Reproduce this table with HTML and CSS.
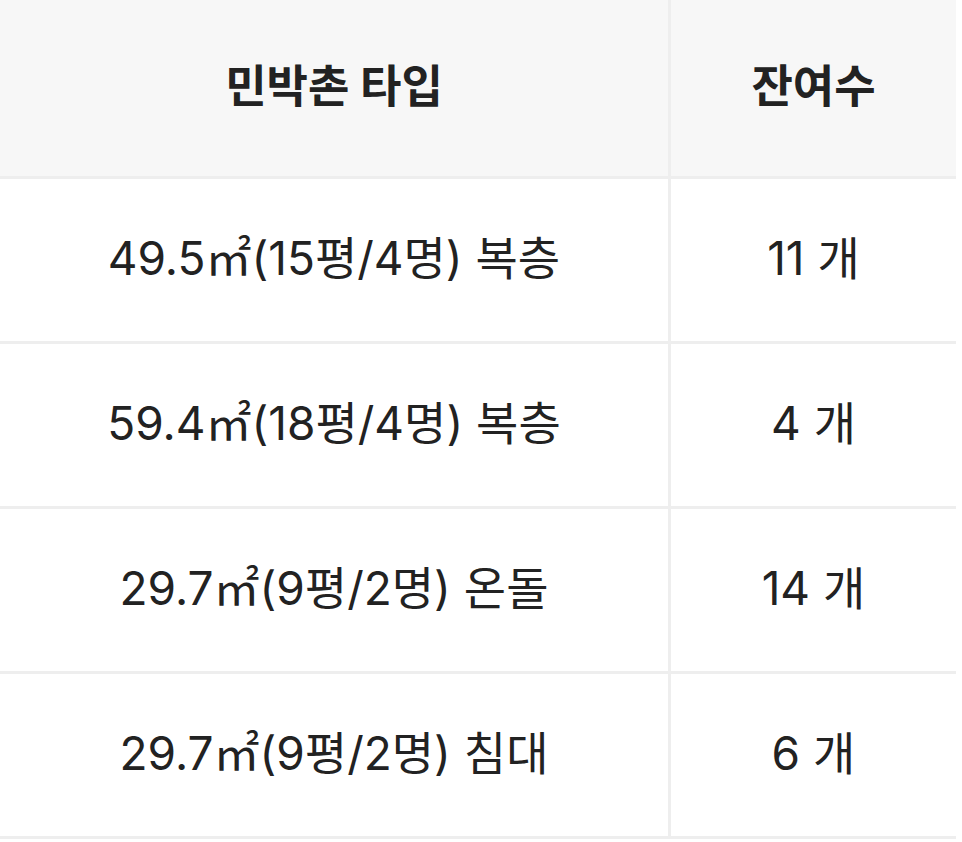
FILE: index.html
```html
<!DOCTYPE html>
<html lang="ko">
<head>
<meta charset="utf-8">
<link rel="stylesheet" href="styles.css">
</head>
<body>
<table class="room-table">
  <thead>
    <tr>
      <th class="col-type">민박촌 타입</th>
      <th class="col-count">잔여수</th>
    </tr>
  </thead>
  <tbody>
    <tr><td>49.5㎡(15평/4명) 복층</td><td>11 개</td></tr>
    <tr><td>59.4㎡(18평/4명) 복층</td><td>4 개</td></tr>
    <tr><td>29.7㎡(9평/2명) 온돌</td><td>14 개</td></tr>
    <tr><td>29.7㎡(9평/2명) 침대</td><td>6 개</td></tr>
  </tbody>
</table>
</body>
</html>
```
FILE: styles.css
```css
html, body {
  margin: 0;
  padding: 0;
  background: #fff;
}
body {
  font-family: Inter, "Noto Sans CJK KR", sans-serif;
  color: #222;
}
.room-table {
  width: 956px;
  border-collapse: collapse;
  table-layout: fixed;
}
.room-table th,
.room-table td {
  text-align: center;
  vertical-align: middle;
  border-bottom: 3px solid #eeeeee;
  padding: 0 0 10px;
}
.room-table th:first-child,
.room-table td:first-child {
  border-right: 3px solid #eeeeee;
}
.col-type { width: 668px; }
.room-table thead th {
  background: #f7f7f7;
  font-weight: 700;
  font-size: 45px;
  height: 166px;
}
.room-table tbody td {
  font-weight: 400;
  font-size: 46px;
  height: 152px;
}
```
